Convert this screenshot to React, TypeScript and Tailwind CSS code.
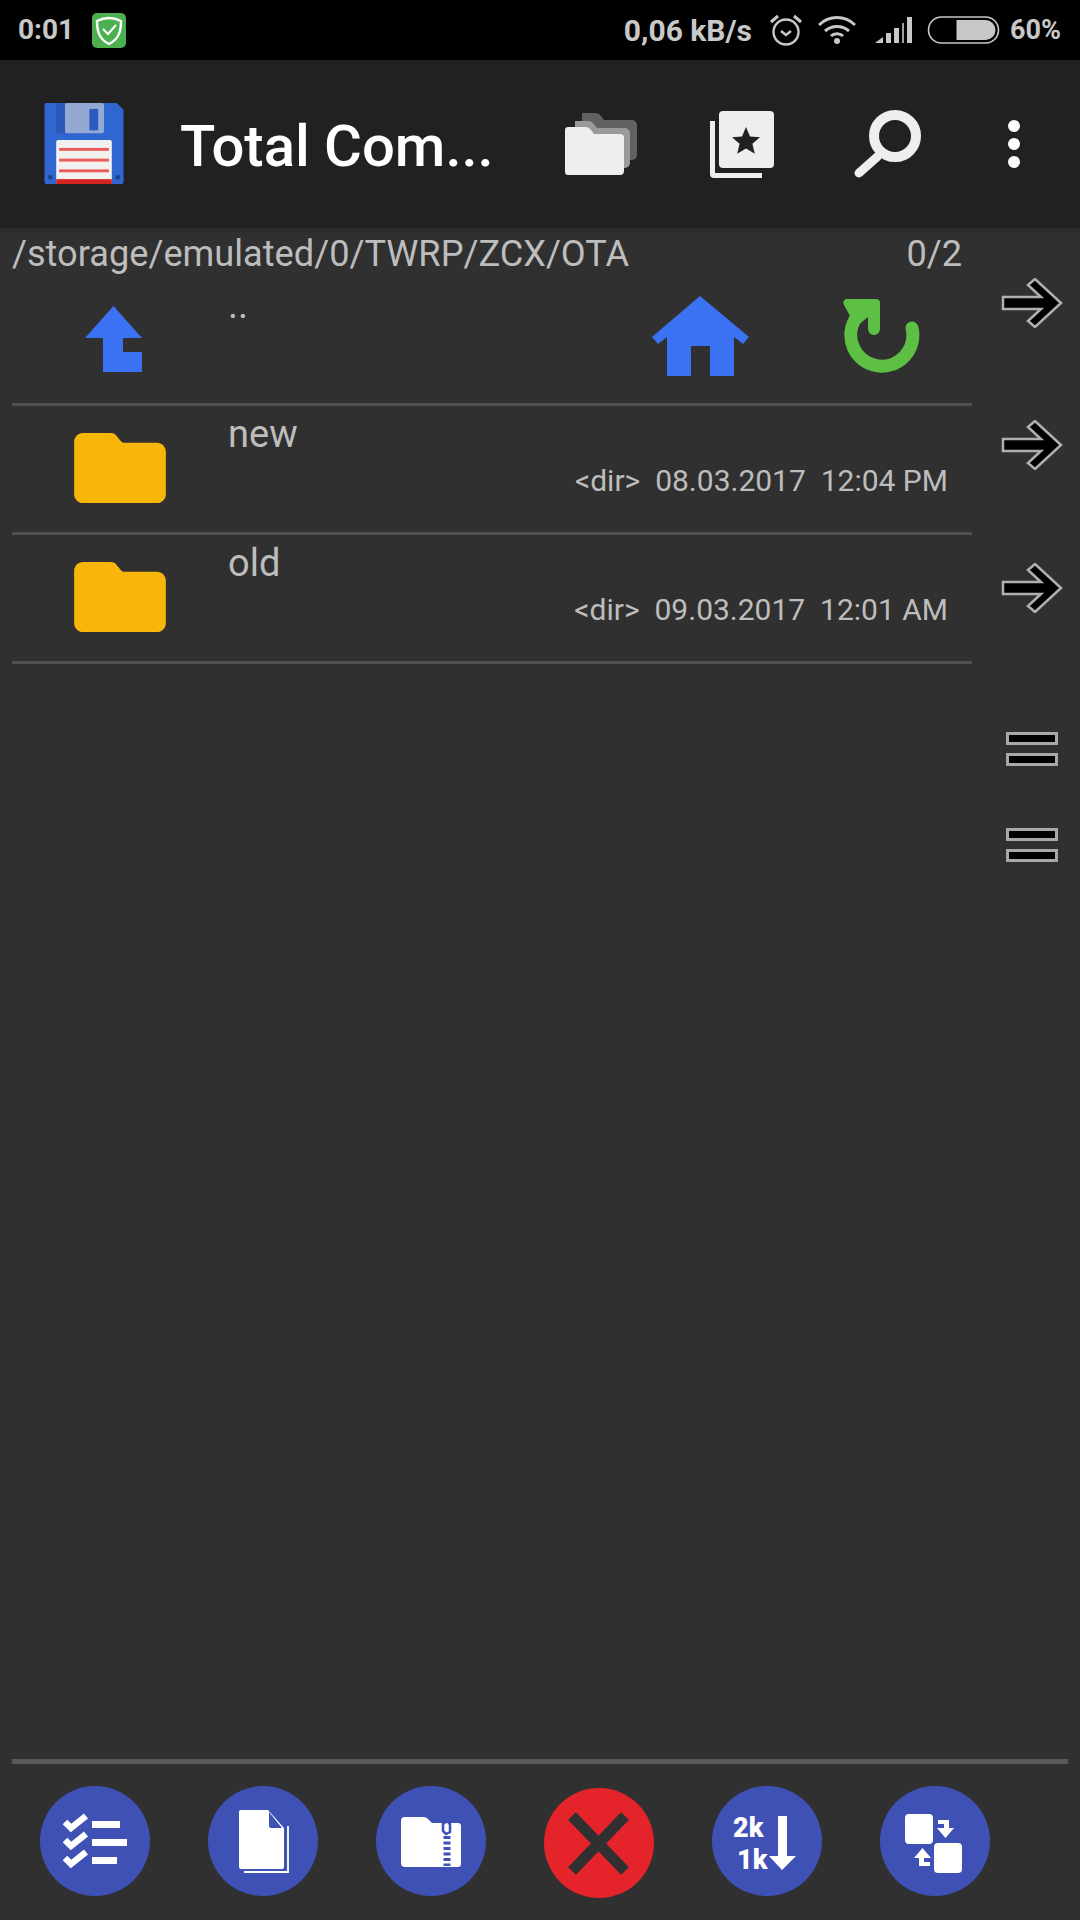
import type { ReactNode } from "react";

const roboto = { fontFamily: "Roboto, sans-serif" };

function FloppyLogo() {
  return (
    <svg width="81" height="82" viewBox="0 0 82 84" className="block">
      <path d="M2 0H74L81 7V81a2 2 0 0 1-2 2H2a2 2 0 0 1-2-2V2a2 2 0 0 1 2-2z" fill="#2f66cf" />
      <rect x="12" y="0" width="9" height="31" fill="#2a58b4" />
      <rect x="21" y="0" width="40" height="31" rx="2" fill="#93a9d3" />
      <rect x="46" y="6" width="9" height="22" fill="#2a5cc0" />
      <rect x="12" y="38" width="57" height="45" rx="2" fill="#f1f1ef" />
      <rect x="12" y="78" width="57" height="5" fill="#d32421" />
      <rect x="15" y="46" width="51" height="3" fill="#ec5a58" />
      <rect x="15" y="57" width="51" height="3" fill="#ec5a58" />
      <rect x="15" y="68" width="51" height="3" fill="#ec5a58" />
      <rect x="4" y="74" width="4" height="4" fill="#1d3f86" />
      <rect x="73" y="74" width="4" height="4" fill="#1d3f86" />
    </svg>
  );
}

function ShieldBadge() {
  return (
    <svg width="34" height="35" viewBox="0 0 34 35" className="block">
      <rect width="34" height="35" rx="5" fill="#4caf50" />
      <path d="M17 5c-4 0-8 1-12 3 0 10 2 18 12 23 10-5 12-13 12-23-4-2-8-3-12-3z" fill="none" stroke="#fff" strokeWidth="2.4" />
      <path d="M11 16l5 5 8-9" fill="none" stroke="#fff" strokeWidth="2" />
    </svg>
  );
}

function StatusIcons() {
  return (
    <>
      <svg width="32" height="34" viewBox="0 0 32 34" fill="none" stroke="#c8c8c8" strokeWidth="2.4" className="ml-[18px]">
        <circle cx="16" cy="19" r="12.5" />
        <path d="M11 18l5 4 5-4" />
        <path d="M1 9l7-6M31 9l-7-6" strokeWidth="3" />
      </svg>
      <svg width="38" height="30" viewBox="0 0 38 30" fill="none" stroke="#c8c8c8" strokeWidth="3" className="ml-[16px]">
        <path d="M1 10c10-10 26-10 36 0M7 16c7-6 17-6 24 0M13 21c3-3 9-3 12 0" />
        <circle cx="19" cy="26" r="3" fill="#c8c8c8" stroke="none" />
      </svg>
      <svg width="37" height="26" viewBox="0 0 37 26" fill="#c8c8c8" className="ml-[19px]">
        <path d="M0 26L8 20V26z" />
        <rect x="11" y="16" width="5" height="10" />
        <rect x="19" y="11" width="5" height="15" />
        <rect x="27" y="6" width="2" height="20" opacity="0.8" />
        <rect x="32" y="0" width="5" height="26" />
      </svg>
      <svg width="73" height="28" viewBox="0 0 72 28" className="ml-[15px]">
        <rect x="1" y="1" width="70" height="26" rx="13" fill="none" stroke="#c8c8c8" strokeWidth="1.6" />
        <path d="M29 4H58a10 10 0 0 1 0 20H29z" fill="#c8c8c8" />
      </svg>
    </>
  );
}

function FoldersIcon() {
  return (
    <svg width="72" height="62" viewBox="0 0 72 62" className="block">
      <path d="M17 0h13c3 0 4 1 6 3l3 4h28a5 5 0 0 1 5 5v30a5 5 0 0 1-5 5H17z" fill="#616161" />
      <path d="M10 8h13c3 0 4 1 6 3l3 4h28a5 5 0 0 1 5 5v30a5 5 0 0 1-5 5H10z" fill="#9a9a9a" />
      <path d="M3 14h17c3 0 4 1 6 3l3 4h26a4 4 0 0 1 4 4v33a4 4 0 0 1-4 4H3a3 3 0 0 1-3-3V17a3 3 0 0 1 3-3z" fill="#eeeeee" />
    </svg>
  );
}

function BookmarksIcon() {
  return (
    <svg width="64" height="67" viewBox="0 0 64 67" className="block">
      <path d="M0 10h5v52h47v5H4a4 4 0 0 1-4-4z" fill="#eeeeee" />
      <rect x="9" y="0" width="55" height="57" rx="4" fill="#eeeeee" />
      <path d="M36 16l4 9.500 10 .8-7.600 6.500 2.400 10-8.800-5.400-8.800 5.400 2.400-10-7.600-6.500 10-.8z" fill="#212121" />
    </svg>
  );
}

function SearchIcon() {
  return (
    <svg width="68" height="68" viewBox="0 0 68 68" fill="none" stroke="#eeeeee" className="block">
      <circle cx="41" cy="26" r="21" strokeWidth="10" />
      <path d="M23 47L5 63" strokeWidth="9" strokeLinecap="round" />
    </svg>
  );
}

function ParentIcon() {
  return (
    <svg width="57" height="66" viewBox="0 0 57 66" className="block">
      <path d="M28.500 0L57 32H38V46H57V66H18V32H0z" fill="#3b71f3" />
    </svg>
  );
}

function HomeIcon() {
  return (
    <svg width="98" height="80" viewBox="0 0 98 80" className="block">
      <path d="M49 0L98 41l-6 7-9-7V80H59V50H40V80H16V41l-9 7-6-7z" fill="#3b71f3" />
    </svg>
  );
}

function RefreshIcon() {
  return (
    <svg width="78" height="78" viewBox="0 0 78 78" className="block">
      <path d="M70 31A31 31 0 1 1 14 21" fill="none" stroke="#5dbf44" strokeWidth="13" strokeLinecap="round" />
      <path d="M4 2H34a4 4 0 0 1 4 4V32a6 6 0 0 1-12 0V20L14 30 2 8a4 4 0 0 1 2-6z" fill="#5dbf44" />
    </svg>
  );
}

function FolderIcon() {
  return (
    <svg width="94" height="70" viewBox="0 0 93 71" className="block">
      <path d="M9 0h28c3 0 5 1 6 3l5 6c1 1 2 1 3 1h33c5 0 9 4 9 9v43c0 5-4 9-9 9H9c-5 0-9-4-9-9V9c0-5 4-9 9-9z" fill="#f8b60a" />
    </svg>
  );
}

function ArrowGlyph() {
  return (
    <svg width="62" height="50" viewBox="0 0 62 50" className="block">
      <path d="M2 19H40L27 7l7-6 26 24-26 24-7-6 13-12H2z" fill="#000" stroke="#b0b0b0" strokeWidth="2.500" />
    </svg>
  );
}

function EqualGlyph() {
  return (
    <div className="flex flex-col gap-[8px]">
      <div className="w-[52px] h-[13px] bg-black border-[3px] border-[#a8a8a8]" />
      <div className="w-[52px] h-[13px] bg-black border-[3px] border-[#a8a8a8]" />
    </div>
  );
}

function Round({ children, red }: { children: ReactNode; red?: boolean }) {
  return (
    <div className={`w-[110px] h-[110px] rounded-full flex items-center justify-center ${red ? "bg-[#e5232b] mt-[2px]" : "bg-[#3f51b5]"}`}>
      <svg width="110" height="110" viewBox="0 0 110 110">{children}</svg>
    </div>
  );
}

function FileRow({ name, date, time }: { name: string; date: string; time: string }) {
  return (
    <div className="flex h-[129px] border-b-[3px] border-[#4f4f4f]">
      <div className="w-[216px] pl-[61px] pt-[27px]">
        <FolderIcon />
      </div>
      <div className="flex-1 flex flex-col pr-6">
        <div className="text-[38px] leading-[42px] text-[#bdbdbd] pt-[7px]">{name}</div>
        <div className="text-[30px] leading-[33px] text-[#bdbdbd] text-right whitespace-pre mt-[9px]">
          {`<dir>  ${date}  ${time}`}
        </div>
      </div>
    </div>
  );
}

export default function App() {
  return (
    <div className="w-[1080px] h-[1920px] flex flex-col bg-[#303030] overflow-hidden" style={roboto}>
      {/* status bar */}
      <div className="h-[60px] bg-black flex items-center pl-[18px] pr-[19px] text-[#c8c8c8] font-bold text-[28px]">
        <span>0:01</span>
        <div className="ml-[18px]">
          <ShieldBadge />
        </div>
        <span className="ml-auto font-bold text-[30px]">0,06 kB/s</span>
        <StatusIcons />
        <span className="ml-[10px] font-bold text-[27px]">60%</span>
      </div>

      {/* toolbar */}
      <div className="h-[168px] bg-[#212121] flex items-center shadow-md relative z-10">
        <div className="ml-[44px]">
          <FloppyLogo />
        </div>
        <div className="ml-[55px] w-[385px] pt-[3px] text-white font-medium text-[58px] leading-none whitespace-nowrap">Total Com...</div>
        <FoldersIcon />
        <div className="ml-[73px]">
          <BookmarksIcon />
        </div>
        <div className="ml-[80px]">
          <SearchIcon />
        </div>
        <div className="ml-[86px] flex flex-col gap-[6px]">
          <div className="w-3 h-3 rounded-full bg-white" />
          <div className="w-3 h-3 rounded-full bg-white" />
          <div className="w-3 h-3 rounded-full bg-white" />
        </div>
      </div>

      {/* panel + side strip */}
      <div className="flex-1 flex">
        <div className="w-[960px] ml-[12px]">
          <div className="h-[49px] flex justify-between items-center pr-[10px] pt-[3px] text-[36.200px] text-[#bdbdbd]">
            <span>/storage/emulated/0/TWRP/ZCX/OTA</span>
            <span>0/2</span>
          </div>
          <div className="flex h-[129px] border-b-[3px] border-[#4f4f4f]">
            <div className="w-[216px] pl-[73px] pt-[29px]">
              <ParentIcon />
            </div>
            <div className="flex-1 text-[38px] leading-[42px] text-[#bdbdbd] pt-[7px]">..</div>
            <div className="pt-[19px] mr-[93px]">
              <HomeIcon />
            </div>
            <div className="pt-[20px] mr-[52px]">
              <RefreshIcon />
            </div>
          </div>
          <FileRow name="new" date="08.03.2017" time="12:04 PM" />
          <FileRow name="old" date="09.03.2017" time="12:01 AM" />
        </div>
        <div className="flex flex-col pl-[29px] pt-[50px]">
          <ArrowGlyph />
          <div className="mt-[92px]">
            <ArrowGlyph />
          </div>
          <div className="mt-[93px]">
            <ArrowGlyph />
          </div>
          <div className="mt-[119px] ml-[5px]">
            <EqualGlyph />
          </div>
          <div className="mt-[62px] ml-[5px]">
            <EqualGlyph />
          </div>
        </div>
      </div>

      {/* bottom buttons */}
      <div className="h-[161px] mx-[12px] border-t-[5px] border-[#5a5a5a] pt-[22px] pl-[28px] flex gap-[58px]">
        <Round>
          <g fill="none" stroke="#fff" strokeWidth="6.500">
            <path d="M25 36l6 6 15-12" />
            <path d="M25 54l6 6 15-12" />
            <path d="M25 72l6 6 15-12" />
          </g>
          <g fill="#fff">
            <rect x="52" y="35" width="28" height="7" />
            <rect x="52" y="53" width="35" height="7" />
            <rect x="52" y="71" width="25" height="7" />
          </g>
        </Round>
        <Round>
          <path d="M33 24H60L76 42V81a2 2 0 0 1-2 2H33a2 2 0 0 1-2-2V26a2 2 0 0 1 2-2z" fill="#fff" />
          <path d="M61 26L74 42H63a2 2 0 0 1-2-2z" fill="#3f51b5" />
          <path d="M80 40V86H36" fill="none" stroke="#fff" strokeWidth="1.800" />
        </Round>
        <Round>
          <path d="M29 31H47c3 0 4 1 6 3l3 3H82a3 3 0 0 1 3 3V78a3 3 0 0 1-3 3H29a4 4 0 0 1-4-4V35a4 4 0 0 1 4-4z" fill="#fff" />
          <path d="M67 38l4-3 3 3v8l-4 2-3-3z" fill="none" stroke="#3f51b5" strokeWidth="2.500" />
          <path d="M71 50V80" stroke="#3f51b5" strokeWidth="7" strokeDasharray="3 2.500" />
        </Round>
        <Round red>
          <path d="M29 31L82 86M82 31L29 86" stroke="#303030" strokeWidth="11" transform="translate(-1 -3)" />
        </Round>
        <Round>
          <text x="21" y="51" fill="#fff" fontSize="27" fontWeight="900" fontFamily="Roboto, sans-serif">2k</text>
          <text x="25" y="83" fill="#fff" fontSize="27" fontWeight="900" fontFamily="Roboto, sans-serif">1k</text>
          <path d="M66 30H75V70H84L70 84 57 70H66z" fill="#fff" />
        </Round>
        <Round>
          <rect x="25" y="28" width="28" height="30" rx="4" fill="#fff" />
          <rect x="54" y="57" width="28" height="30" rx="4" fill="#fff" />
          <path d="M58 34H69V42H74L65.500 52 57 42H64V38H58z" fill="#fff" />
          <path d="M50 80H39V72H34L42.500 62 51 72H44V76H50z" fill="#fff" />
        </Round>
      </div>
    </div>
  );
}
